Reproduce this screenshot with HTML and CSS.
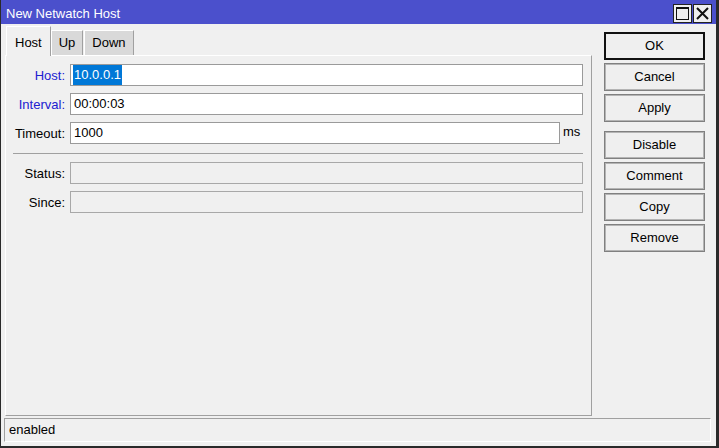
FILE: index.html
```html
<!DOCTYPE html>
<html>
<head>
<meta charset="utf-8">
<title>New Netwatch Host</title>
<link rel="stylesheet" href="styles.css">
</head>
<body>
<div class="window">
  <div class="titlebar">
    <span class="title">New Netwatch Host</span>
    <div class="tb-btns">
      <span class="tb-btn"><svg width="17" height="17" viewBox="0 0 17 17"><rect x="2.5" y="2.5" width="12" height="12" fill="none" stroke="#111" stroke-width="1"/><line x1="2" y1="3" x2="15" y2="3" stroke="#111" stroke-width="2"/></svg></span>
      <span class="tb-btn"><svg width="17" height="17" viewBox="0 0 17 17"><path d="M3 3 L14 14 M14 3 L3 14" stroke="#111" stroke-width="2" fill="none"/></svg></span>
    </div>
  </div>
  <div class="main">
    <div class="left">
      <div class="tabs">
        <div class="tab active">Host</div>
        <div class="tab">Up</div>
        <div class="tab">Down</div>
      </div>
      <div class="panel">
        <div class="form">
          <label class="lbl blue">Host:</label>
          <div class="field span2"><span class="sel">10.0.0.1</span></div>
          <label class="lbl blue">Interval:</label>
          <div class="field span2">00:00:03</div>
          <label class="lbl">Timeout:</label>
          <div class="field">1000</div>
          <span class="unit">ms</span>
          <div class="sep"></div>
          <label class="lbl">Status:</label>
          <div class="field span2 disabled"></div>
          <label class="lbl">Since:</label>
          <div class="field span2 disabled"></div>
        </div>
      </div>
    </div>
    <div class="buttons">
      <div class="btn default">OK</div>
      <div class="btn">Cancel</div>
      <div class="btn">Apply</div>
      <div class="btn group">Disable</div>
      <div class="btn">Comment</div>
      <div class="btn">Copy</div>
      <div class="btn">Remove</div>
    </div>
  </div>
  <div class="status"><div class="status-cell">enabled</div></div>
</div>
</body>
</html>
```
FILE: styles.css
```css
html, body {
  margin: 0;
  padding: 0;
  background: #f0f0f0;
}
body {
  font-family: "Liberation Sans", Arial, sans-serif;
  font-size: 13px;
  color: #000;
}
.window {
  width: 719px;
  height: 448px;
  box-sizing: border-box;
  border-left: 1px solid #2a2a2a;
  border-right: 3px solid #2a2a2a;
  border-bottom: 2px solid #2a2a2a;
  background: #f0f0f0;
  display: flex;
  flex-direction: column;
}
.titlebar {
  height: 24px;
  flex: none;
  background: #4b50cc;
  display: flex;
  justify-content: space-between;
}
.title {
  color: #fff;
  padding: 4px 0 0 5px;
  line-height: 20px;
}
.tb-btns {
  display: flex;
  gap: 1px;
  padding: 4px 4px 0 0;
}
.tb-btn {
  width: 19px;
  height: 19px;
  box-sizing: border-box;
  border: 1px solid #222;
  background: #efefef;
  display: flex;
  align-items: center;
  justify-content: center;
}
.tb-btn svg { display: block; }
.main {
  flex: 1;
  display: flex;
  padding-left: 4px;
  min-height: 0;
}
.left {
  width: 587px;
  display: flex;
  flex-direction: column;
}
.tabs {
  height: 31px;
  display: flex;
  align-items: flex-end;
  padding-left: 1px;
  position: relative;
  z-index: 1;
}
.tab {
  box-sizing: border-box;
  height: 25px;
  padding: 4px 7px 0;
  line-height: 15px;
  background: #d9d9d9;
  border-top: 1px solid #fff;
  border-left: 1px solid #fff;
  border-right: 1px solid #a0a0a0;
  margin-right: 1px;
}
.tab.active {
  height: 30px;
  padding: 8px 8px 0;
  background: #f0f0f0;
  margin-bottom: -1px;
  margin-right: 0;
}
.panel {
  flex: 1;
  box-sizing: border-box;
  border-top: 1px solid #fff;
  border-left: 1px solid #fff;
  border-right: 1px solid #a0a0a0;
  border-bottom: 1px solid #a0a0a0;
}
.form {
  display: grid;
  grid-template-columns: 64px 1fr 23px;
  row-gap: 7px;
  padding: 8px 8px 0 0;
  align-items: center;
}
.lbl {
  text-align: right;
  padding-right: 5px;
  white-space: nowrap;
  line-height: 15px;
}
.lbl.blue { color: #2020d0; }
.field {
  height: 22px;
  box-sizing: border-box;
  border: 1px solid #9a9a9a;
  background: #fff;
  line-height: 20px;
  padding-left: 3px;
  white-space: nowrap;
}
.field.span2 { grid-column: 2 / 4; }
.field.disabled { background: #f0f0f0; border-color: #a8a8a8; }
.sel {
  background: #0078d7;
  color: #fff;
  display: inline-block;
  padding: 0 1px;
  margin-left: -1px;
}
.unit {
  padding-left: 3px;
  line-height: 15px;
  padding-bottom: 4px;
}
.sep {
  grid-column: 1 / -1;
  height: 1px;
  background: #a0a0a0;
  margin: 2px 0 1px 7px;
}
.buttons {
  margin-left: 12px;
  width: 101px;
  padding-top: 8px;
}
.btn {
  height: 28px;
  box-sizing: border-box;
  border: 1px solid #808080;
  box-shadow: inset 0 0 0 1px #b4b4b4;
  background: #efefef;
  text-align: center;
  line-height: 26px;
  margin-bottom: 3px;
}
.btn.default {
  border: 2px solid #111;
  box-shadow: none;
  line-height: 24px;
}
.btn.group { margin-top: 9px; }
.status {
  flex: none;
  margin: 2px 5px 4px 3px;
}
.status-cell {
  height: 24px;
  box-sizing: border-box;
  border-top: 1px solid #a0a0a0;
  border-left: 1px solid #a0a0a0;
  border-right: 1px solid #fff;
  border-bottom: 1px solid #fff;
  padding-left: 4px;
  line-height: 22px;
}
```
